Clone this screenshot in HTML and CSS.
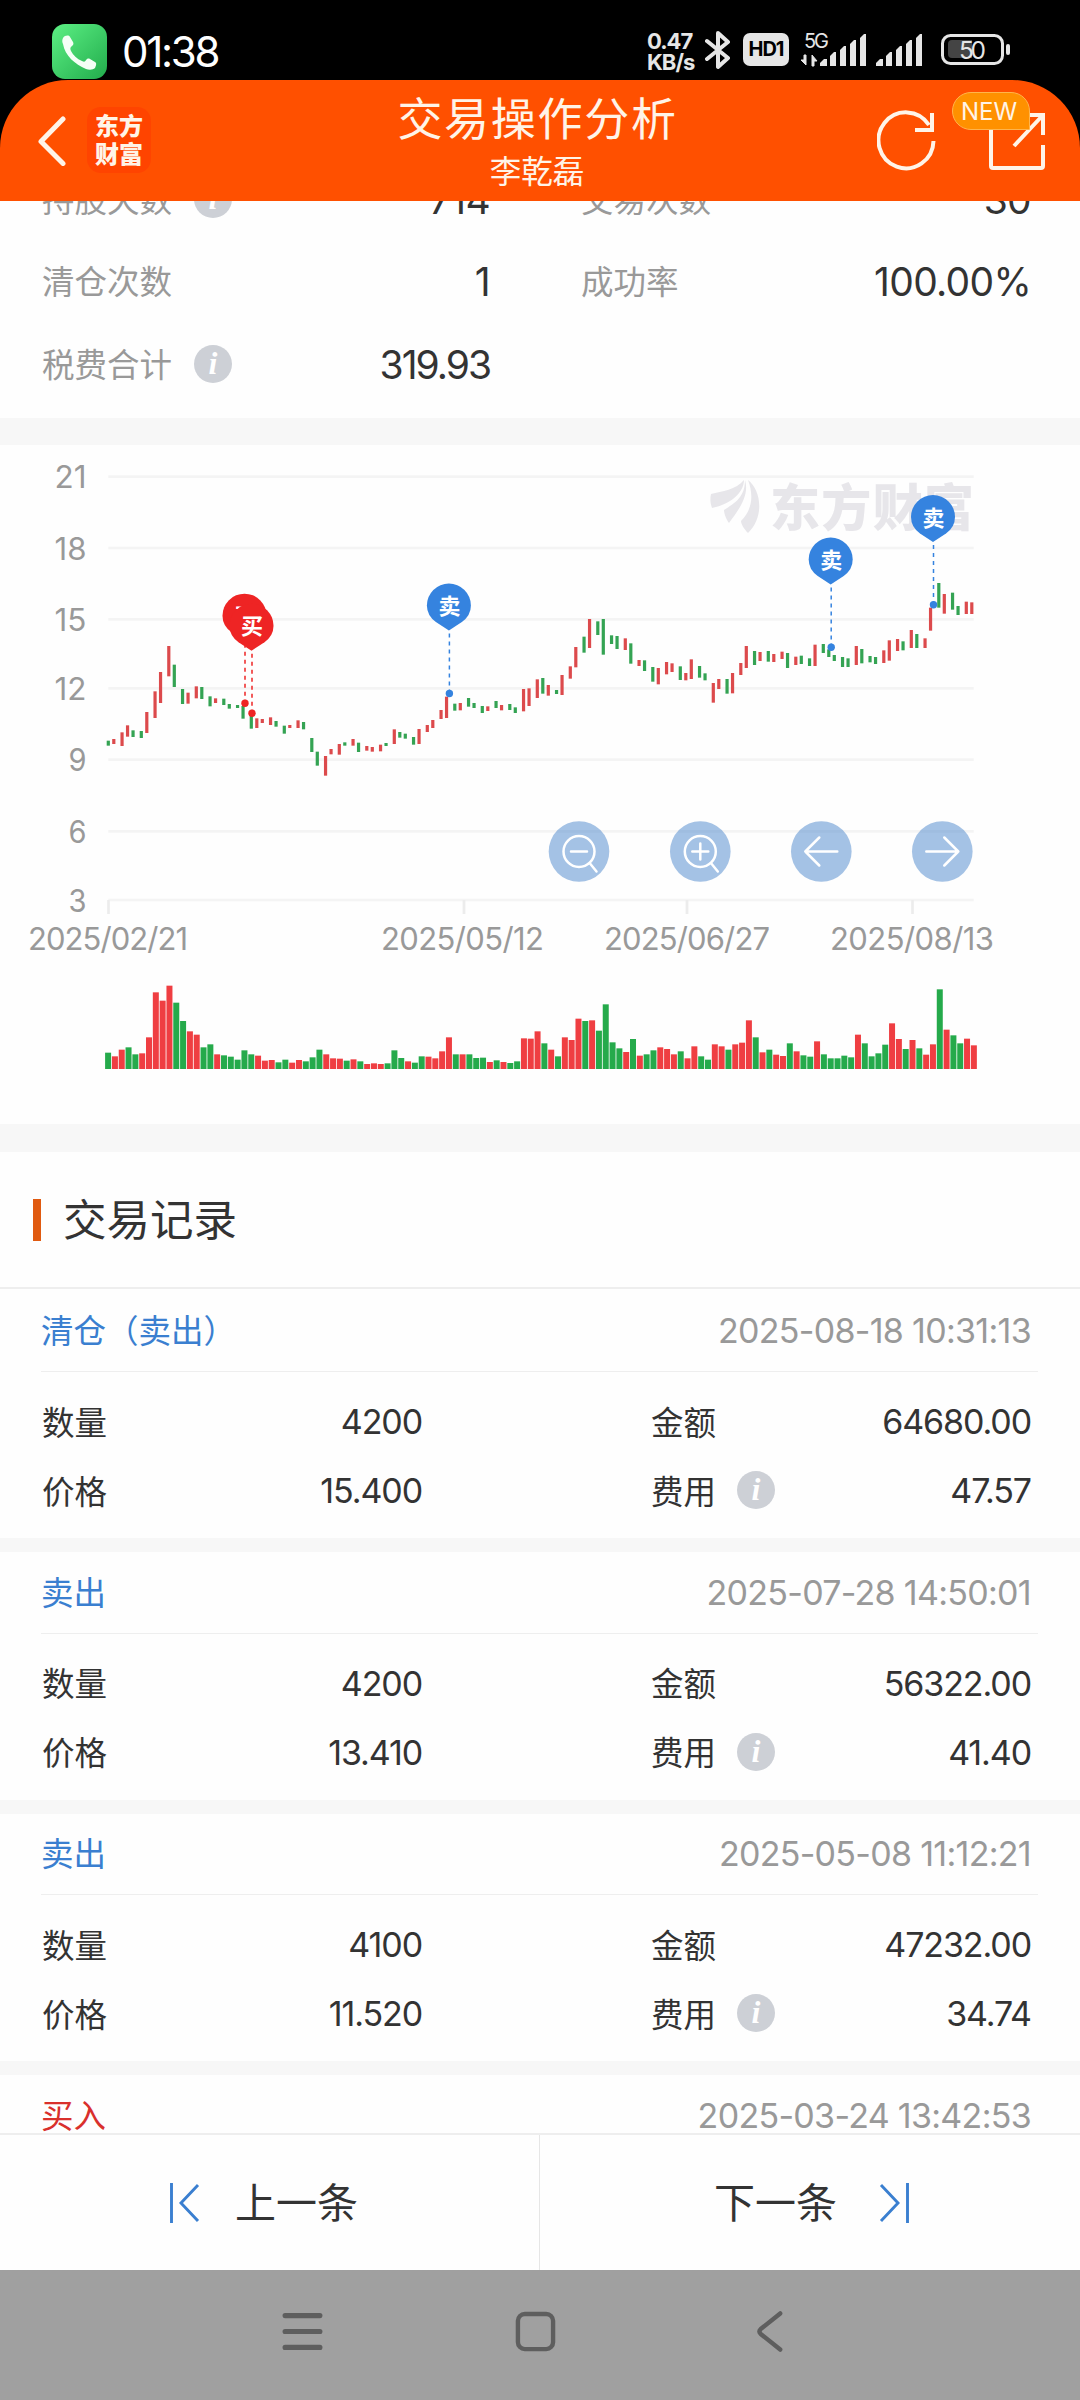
FILE: index.html
```html
<!DOCTYPE html>
<html lang="zh-CN">
<head>
  <meta charset="UTF-8">
  <title>交易操作分析</title>
  <link rel="stylesheet" href="styles.css">
</head>
<body>

<div class="status-bar">
  <div class="status-left">
    <svg class="call-icon" viewBox="0 0 55 55">
      <defs>
        <linearGradient id="callBg" x1="0" y1="0" x2="1" y2="1">
          <stop offset="0" stop-color="#5cf084"/>
          <stop offset="1" stop-color="#22ac4c"/>
        </linearGradient>
      </defs>
      <rect width="55" height="55" rx="13" fill="url(#callBg)"/>
      <path d="M11 14c2-3 6-3 7-1l3 5c1 2 0 3-1 4-2 1-2 3-1 5 2 4 6 8 11 10 2 1 3 1 4-1 1-1 2-2 4-1l5 3c2 1 1 4 0 6-2 2-6 2-9 1C23 40 13 32 11 20c-1-2-1-4 0-6z" fill="#f4fff6"/>
    </svg>
    <span class="clock">01:38</span>
  </div>
  <div class="status-right">
    <div class="net-speed"><span>0.47</span><span>KB/s</span></div>
    <svg class="bt-icon" viewBox="0 0 26 40">
      <path d="M2 11l21 17-10 9V3l10 9L2 29" fill="none" stroke="#e6e6e6" stroke-width="4" stroke-linejoin="round" stroke-linecap="round"/>
    </svg>
    <span class="hd">HD1</span>
    <svg class="signal" viewBox="0 0 124 36" fill="#e6e6e6">
      <text x="4" y="15" class="fiveg" textLength="25">5G</text>
      <path d="M6 22v10l-5-5h3v-5zM12 33V22l5 6h-3v5z" stroke="#e6e6e6" stroke-width="1"/>
      <path d="M20 33v-3l4-4h3v7zM30 33V23l4-4h2v14zM40 33V17l4-4h2v20zM50 33V11l4-4h2v26zM60 33V5l4-4h2v32z"/>
      <path d="M76 33v-3l4-4h3v7zM86 33V23l4-4h2v14zM96 33V17l4-4h2v20zM106 33V11l4-4h2v26zM116 33V5l4-4h2v32z"/>
    </svg>
    <svg class="battery" viewBox="0 0 70 32">
      <rect x="1.5" y="1.5" width="60" height="28" rx="8" fill="none" stroke="#e6e6e6" stroke-width="3"/>
      <path d="M11 6h20v18H11a4 4 0 0 1-4-4V10a4 4 0 0 1 4-4z" fill="#444"/>
      <rect x="65" y="10" width="4" height="11" rx="2" fill="#e6e6e6"/>
      <text x="18" y="24.500" class="batt-num" textLength="27">50</text>
    </svg>
  </div>
</div>

<div class="header-wrap">
  <header class="header">
    <div class="header-left">
      <svg class="back" viewBox="0 0 28 50">
        <path d="M25 3L3 25.500l22 22" fill="none" stroke="#fff4e8" stroke-width="5" stroke-linecap="round" stroke-linejoin="round"/>
      </svg>
      <div class="brand"><span>东方</span><span>财富</span></div>
    </div>
    <div class="header-title">
      <h1>交易操作分析</h1>
      <p>李乾磊</p>
    </div>
    <div class="header-right">
      <svg class="refresh" viewBox="0 0 60 62">
        <path d="M56.500 31A27.500 28 0 1 1 52 15" fill="none" stroke="#fff4e8" stroke-width="4"/>
        <path d="M55 3v17H38" fill="none" stroke="#fff4e8" stroke-width="4"/>
      </svg>
      <div class="share">
        <svg viewBox="0 0 56 60">
          <path d="M2 10v45q0 2 2 2h48q2 0 2-2V34" fill="none" stroke="#fff4e8" stroke-width="4"/>
          <path d="M30 4h24v20M54 4L25 35" fill="none" stroke="#fff4e8" stroke-width="4"/>
        </svg>
        <span class="new-badge">NEW</span>
      </div>
    </div>
  </header>
</div>

<main class="content">
  <section class="stats">
    <div class="stat"><label>持股天数</label><i class="info">i</i><b>714</b></div>
    <div class="stat"><label>交易次数</label><b>30</b></div>
    <div class="stat"><label>清仓次数</label><b>1</b></div>
    <div class="stat"><label>成功率</label><b>100.00%</b></div>
    <div class="stat"><label>税费合计</label><i class="info">i</i><b class="fee-total">319.93</b></div>
  </section>

  <section class="chart">
    <svg id="chart" viewBox="0 5 1080 679">
      <defs>
        <path id="pin" d="M0 25L-13 16.500Q-22 10-22 0A22 22 0 0 1 22 0Q22 10 13 16.500Z"/>
      </defs>
      <g id="grid"></g>
      <g fill="#e7e6ea">
        <path d="M711 494C722 491 736 490 744 480C744 494 728 505 712 508C710 503 710 498 711 494z" transform="translate(0 -440)"/>
        <path d="M745 480C750 496 737 512 729 523C726 519 724 513 724 510C735 503 745 497 745 480z" transform="translate(0 -440)"/>
        <path d="M748 480C762 491 764 518 748 533C744 529 741 524 741 521C752 510 754 496 748 480z" transform="translate(0 -440)"/>
        <text class="watermark" x="770" y="86" textLength="204">东方财富</text>
      </g>
      <g id="candles"></g>
      <g id="markers"></g>
      <g id="volume"></g>
      <g id="tools" fill="none" stroke="#fff" stroke-width="2.500" stroke-linecap="round" stroke-linejoin="round">
        <g transform="translate(579 411.500)">
          <circle class="tool-bg" r="30.300"/>
          <circle r="15.500"/><path d="M-8 0H8M11 12l6.500 8"/>
        </g>
        <g transform="translate(700.300 411.500)">
          <circle class="tool-bg" r="30.300"/>
          <circle r="15.500"/><path d="M-8 0H8M0-8V8M11 12l6.500 8"/>
        </g>
        <g transform="translate(821.300 411.500)">
          <circle class="tool-bg" r="30.300"/>
          <path d="M16 0H-16M-2-14L-16 0L-2 14"/>
        </g>
        <g transform="translate(942.300 411.500)">
          <circle class="tool-bg" r="30.300"/>
          <path d="M-16 0H16M2-14L16 0L2 14"/>
        </g>
      </g>
    </svg>
  </section>

  <section class="records">
    <h2><span>交易记录</span></h2>

    <article class="record">
      <div class="record-head"><span class="sell">清仓（卖出）</span><time>2025-08-18 10:31:13</time></div>
      <div class="record-body">
        <label>数量</label><b>4200</b><label class="c2">金额</label><b>64680.00</b>
        <label>价格</label><b>15.400</b><label class="c2">费用<i class="info">i</i></label><b>47.57</b>
      </div>
    </article>

    <article class="record">
      <div class="record-head"><span class="sell">卖出</span><time>2025-07-28 14:50:01</time></div>
      <div class="record-body">
        <label>数量</label><b>4200</b><label class="c2">金额</label><b>56322.00</b>
        <label>价格</label><b>13.410</b><label class="c2">费用<i class="info">i</i></label><b>41.40</b>
      </div>
    </article>

    <article class="record">
      <div class="record-head"><span class="sell">卖出</span><time>2025-05-08 11:12:21</time></div>
      <div class="record-body">
        <label>数量</label><b>4100</b><label class="c2">金额</label><b>47232.00</b>
        <label>价格</label><b>11.520</b><label class="c2">费用<i class="info">i</i></label><b>34.74</b>
      </div>
    </article>

    <article class="record">
      <div class="record-head"><span class="buy">买入</span><time>2025-03-24 13:42:53</time></div>
    </article>
  </section>
</main>

<footer class="pager">
  <div class="prev">
    <svg viewBox="0 0 30 40"><path d="M1.500 0v40M28 2L11 20l17 18" fill="none" stroke="#3a7fd0" stroke-width="2.900"/></svg>
    <span>上一条</span>
  </div>
  <div class="next">
    <span>下一条</span>
    <svg viewBox="0 0 30 40"><path d="M28.500 0v40M2 2l17 18L2 38" fill="none" stroke="#3a7fd0" stroke-width="2.900"/></svg>
  </div>
</footer>

<nav class="sys-nav">
  <svg viewBox="0 0 40 40"><path d="M3 4.500h34M3 20h34M3 35.500h34" stroke-width="5"/></svg>
  <svg viewBox="0 0 42 42"><rect x="3" y="3" width="36" height="36" rx="7" stroke-width="4.500"/></svg>
  <svg viewBox="0 0 42 42"><path d="M33 2.500L13 18.500q-2.500 2.500 0 5L33 39.500" stroke-width="4.500"/></svg>
</nav>

<script src="chart.js"></script>
</body>
</html>
```
FILE: styles.css
```css
* { box-sizing: border-box; margin: 0; padding: 0; }
html, body { width: 1080px; height: 2400px; overflow: hidden; }
body {
  display: flex;
  flex-direction: column;
  background: #fefefe;
  color: #333;
  font-family: Inter, "Noto Sans CJK SC", sans-serif;
}
svg { display: block; flex: none; }
b, i { font-weight: normal; font-style: normal; }

/* status bar */
.status-bar { flex: none; height: 80px; background: #000; display: flex; justify-content: space-between; padding: 24px 69px 0 52px; color: #fff; }
.status-left { display: flex; gap: 15px; }
.call-icon { width: 55px; height: 55px; }
.clock { font-size: 42px; line-height: 56px; letter-spacing: -2.300px; }
.status-right { display: flex; align-items: flex-start; color: #e6e6e6; }
.net-speed { display: flex; flex-direction: column; width: 48px; margin-top: 7px; font-size: 22px; line-height: 21px; font-weight: 700; letter-spacing: -1px; white-space: nowrap; }
.bt-icon { width: 26px; height: 40px; margin: 6px 12px 0 10px; }
.hd { width: 46px; height: 33px; margin-top: 9px; border-radius: 7px; background: #e6e6e6; color: #000; font-size: 20px; line-height: 33px; font-weight: 700; letter-spacing: -1px; text-align: center; }
.signal { width: 124px; height: 36px; margin: 9px 17px 0 11px; }
.fiveg { font-size: 20px; }
.battery { width: 70px; height: 32px; margin-top: 10px; }
.batt-num { font-size: 24.500px; fill: #e6e6e6; }

/* orange header */
.header-wrap { flex: none; height: 121px; background: #000; }
.header { height: 121px; background: #ff5000; border-radius: 68px 68px 0 0; display: grid; grid-template-columns: 300px 1fr 300px; color: #fff4e8; }
.header-left { display: flex; padding-left: 38px; }
.back { width: 28px; height: 50px; margin-top: 36px; }
.brand { width: 64px; height: 66px; margin: 27px 0 0 21px; padding-top: 6px; border-radius: 14px; background: #ff4400; font-size: 24px; line-height: 28px; font-weight: 900; text-align: center; display: flex; flex-direction: column; }
.header-title { text-align: center; }
.header-title h1 { font-size: 45px; line-height: 60px; font-weight: 400; letter-spacing: 1.700px; margin: 10px -9px 0 -14px; white-space: nowrap; }
.header-title p { font-size: 31.500px; line-height: 40px; margin: 2px 6px 0 0; }
.header-right { display: flex; padding: 31px 0 0 97px; }
.refresh { width: 60px; height: 62px; margin-top: -1px; }
.share { position: relative; margin-left: 52px; }
.share svg { width: 56px; height: 60px; }
.new-badge { position: absolute; left: -37px; top: -19px; width: 78px; height: 38px; border: 1px solid #ffb54d; border-radius: 19px 19px 1px 19px; background: #ff9100; font-size: 24px; line-height: 37px; text-align: center; padding-right: 4px; }

/* scrolled content */
.content { flex: 1; min-height: 0; overflow: hidden; }
.stats { height: 260px; margin-top: -43px; padding: 0 49px 0 42px; display: grid; grid-template-columns: 448px 1fr; column-gap: 91px; grid-auto-rows: 82.500px; }
.stat { display: flex; align-items: center; font-size: 39px; }
.stat label { position: relative; top: -2px; font-size: 32.500px; color: #999; }
.stat b { margin-left: auto; letter-spacing: -0.700px; }
.stat .fee-total { letter-spacing: -2px; }
.info { display: inline-block; flex: none; width: 38px; height: 38px; border-radius: 50%; background: #cdd0d6; color: #fff; font: italic bold 32px/36px "Liberation Serif", serif; text-align: center; }
.stat .info { margin-left: 22px; }
.chart { border-top: 27px solid #f7f7f7; border-bottom: 28px solid #f7f7f7; height: 734px; }
.chart svg { width: 1080px; height: 679px; }
.axis-label { font-size: 31px; fill: #999; }
.watermark { font-size: 50px; font-weight: 900; }
.tool-bg { fill: #4a86cc; fill-opacity: 0.5; stroke: none; }
.pin-text { font-size: 22px; font-weight: 700; fill: #fff; text-anchor: middle; }

/* records */
.records h2 { height: 137px; padding-left: 33px; border-bottom: 2px solid #eee; display: flex; align-items: center; gap: 22px; font-size: 43.500px; font-weight: 400; }
.records h2::before { content: ""; width: 8px; height: 42px; background: #e05a10; }
.records h2 span { margin-top: -4px; }
.record { height: 261.500px; border-bottom: 14px solid #f7f7f7; }
.records h2 + .record { height: 263px; }
.record-head { height: 81.500px; margin: 0 42px 0 41px; padding-right: 7px; border-bottom: 1.500px solid #eee; display: flex; align-items: center; justify-content: space-between; font-size: 32.500px; }
.records h2 + .record .record-head { height: 83px; }
.record-head span { margin-top: -4px; }
.record-head time { color: #999; font-size: 34px; letter-spacing: -0.700px; }
.sell { color: #3a7fd0; }
.buy { color: #d9302c; }
.record-body { margin: 15px 49px 0 42px; display: grid; grid-template-columns: 90px 290px 1fr 200px; grid-auto-rows: 69px; align-items: center; font-size: 34px; }
.record-body label { margin-top: -3px; font-size: 32.500px; display: flex; align-items: center; }
.record-body .info { margin: 2px 0 0 21px; }
.record-body .c2 { padding-left: 229px; }
.record-body b { text-align: right; letter-spacing: -1.100px; }

/* bottom */
.pager { flex: none; height: 137px; border-top: 2px solid #eee; display: grid; grid-template-columns: 1fr 1fr; font-size: 41px; background: #fefefe; }
.pager div { display: flex; align-items: center; }
.pager svg { width: 30px; height: 40px; }
.pager span { margin-top: -5px; }
.prev { padding-left: 170px; gap: 35px; border-right: 1px solid #e6e6e6; }
.next { padding-left: 174px; gap: 42px; }
.sys-nav { flex: none; height: 130px; background: #a0a0a0; display: flex; align-items: center; justify-content: center; gap: 192px; padding: 0 9px 7px 0; }
.sys-nav svg { width: 41px; height: 41px; fill: none; stroke: #5e5e5e; stroke-linecap: round; stroke-linejoin: round; }
```
FILE: chart.js
```js
const RED = "#dc4a4c";
const GREEN = "#34a353";
const PLOT_LEFT = 108.3;
const PLOT_RIGHT = 973.7;

// direction, top, bottom of each daily bar (1/3 px units)
const candles = "G902-917 R897-912 R877-918 R856-890 G871-891 G873-894 R816-879 R754-834 R696-789 R618-709 G674-741 G747-792 R758-791 R739-775 G741-777 G769-799 R775-789 G776-795 G792-806 G795-804 G798-836 G828-866 R835-864 R837-849 R832-855 G843-860 G857-881 R855-864 R841-864 G846-868 G894-936 G935-977 R948-1007 R927-943 R912-944 G907-917 R897-917 G908-936 R918-932 R921-935 R914-934 G909-918 R868-912 G876-893 G881-896 G891-914 R867-912 R855-876 R840-864 R810-837 R770-834 G791-812 R789-811 G774-800 G789-804 G798-819 R799-813 G783-804 R795-811 G792-810 G802-819 R747-814 R745-798 R718-774 G714-761 R735-767 G750-762 R705-765 R679-716 R621-682 G590-638 R537-624 G544-585 G537-644 G586-612 G588-627 R595-630 G610-671 R660-678 G661-693 G681-725 R684-733 R666-703 R670-696 G679-720 R699-721 R658-717 G678-713 G700-721 R729-788 R717-747 G717-761 R699-760 R669-705 R618-684 G633-675 R636-663 G633-665 R642-666 R635-657 G639-684 R650-675 G647-672 G655-678 R614-678 G612-639 G628-651 G645-663 G651-681 G655-681 R618-675 G627-670 G648-667 G651-672 R631-669 R601-662 R597-633 G604-631 R570-624 G582-624 R595-624 R503-572 G429-503 R462-521 G458-509 G498-525 R485-522 R487-522".split(" ");

// direction and height of each volume bar (1/3 px units)
const volumes = "G49 R38 R58 G65 G44 R47 R95 R230 R205 R250 G199 G144 R113 R103 G65 G74 R44 G41 G37 G28 G56 G44 R40 R25 R27 G20 G28 R19 R27 G23 G35 G58 R44 R32 R31 G25 R29 G23 R15 R17 R15 G17 G56 G33 R23 G19 G38 R37 R32 R53 R95 G44 R44 G44 G33 G34 R21 G26 R21 G18 G23 R92 R91 R113 G77 R58 G38 R95 R87 R151 G144 R146 G115 G194 G80 G62 R51 G90 R40 G44 G56 R65 R60 R44 G53 R32 R68 G38 G28 R74 R68 G58 R74 R79 R146 G95 R50 G58 R43 R39 G77 R53 G41 G37 R83 G44 G32 G32 G40 G35 R103 G77 G38 G47 G73 R137 R90 G60 R87 G62 R43 R74 G239 R118 G101 G77 R91 R71".split(" ");

const gridLines = [[21, 36.700], [18, 108], [15, 179.400], [12, 248.300], [9, 319.700], [6, 391.300], [3, 460]];
const dates = [["2025/02/21", 28, 108.500, 160], ["2025/05/12", 381, 464, 163], ["2025/06/27", 604, 687, 166], ["2025/08/13", 830, 912.500, 164]];

const trades = [
  { side: "买", x: 244.500, y: 175.700, dot: 263.300, color: "#ee2424" },
  { side: "买", x: 251.500, y: 185.700, dot: 273.300, color: "#ee2424" },
  { side: "卖", x: 448.900, y: 165.500, dot: 253.500, color: "#3583df" },
  { side: "卖", x: 830.700, y: 119.500, dot: 207.300, color: "#3583df" },
  { side: "卖", x: 933, y: 77, dot: 164.800, color: "#3583df" }
];

let grid = "";
gridLines.forEach(([value, y]) => {
  grid += `<path d="M${PLOT_LEFT} ${y}H${PLOT_RIGHT}" stroke="#f4f4f4" stroke-width="2.700"/>`;
  const w = value > 9 ? 32 : 18;
  grid += `<text class="axis-label" x="${86.500 - w}" y="${y + 11.500}" textLength="${w}" lengthAdjust="spacingAndGlyphs">${value}</text>`;
});
dates.forEach(([text, x, tick, w]) => {
  grid += `<path d="M${tick} 460V474" stroke="#ececec" stroke-width="2.700"/>`;
  grid += `<text class="axis-label" x="${x}" y="510" textLength="${w}">${text}</text>`;
});
document.getElementById("grid").innerHTML = grid;

// bars snap to the 2.75px device grid
document.getElementById("candles").innerHTML = candles.map((c, i) => {
  const [top, bottom] = c.slice(1).split("-").map(Number);
  const x = PLOT_LEFT - 1.600 + Math.floor(i * 2.476 + 0.050) * 2.750;
  return `<rect x="${x}" y="${top / 3}" width="3.200" height="${(bottom - top) / 3}" fill="${c[0] === "R" ? RED : GREEN}"/>`;
}).join("");

document.getElementById("volume").innerHTML = volumes.map((v, i) => {
  const h = v.slice(1) / 3;
  return `<rect x="${105.100 + i * 6.817}" y="${629 - h}" width="6" height="${h}" fill="${v[0] === "R" ? "#ef3e42" : "#25aa4b"}"/>`;
}).join("");

document.getElementById("markers").innerHTML = trades.map(t => `
  <path d="M${t.x + 0.500} ${t.y + 28}V${t.dot}" stroke="${t.color}" stroke-width="1.500" stroke-dasharray="4 4"/>
  <circle cx="${t.x + 0.500}" cy="${t.dot}" r="3.700" fill="${t.color}"/>
  <use href="#pin" x="${t.x}" y="${t.y}" fill="${t.color}"/>
  <text class="pin-text" x="${t.x + 0.500}" y="${t.y + 8.500}">${t.side}</text>`).join("");
```
